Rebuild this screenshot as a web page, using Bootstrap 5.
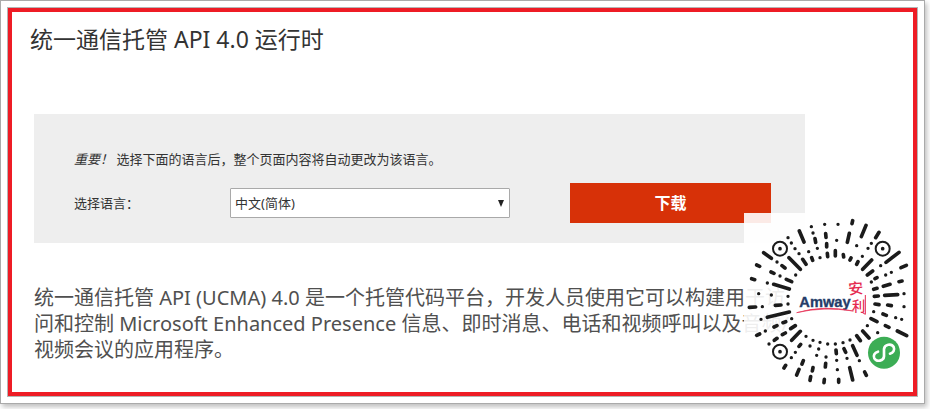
<!DOCTYPE html>
<html lang="zh-CN">
<head>
<meta charset="utf-8">
<meta name="viewport" content="width=device-width, initial-scale=1">
<title>统一通信托管 API 4.0 运行时</title>
<link href="https://cdn.jsdelivr.net/npm/bootstrap@5.3.0/dist/css/bootstrap.min.css" rel="stylesheet">
<style>
body{font-family:"Noto Sans","Noto Sans CJK SC",sans-serif;background:#fff;color:#333}
.sheet{margin:0 5px 5px 0;padding:6px;border:1px solid #aaa;box-shadow:2px 3px 5px rgba(0,0,0,.25)}
.frame{border:4px solid #ee1c25;outline:1px solid #b5b5b5;margin:1px;padding:11px 108px 29px 22px}
.page-title{font-size:23px;line-height:32px;font-weight:400;margin:0 0 59px -4px}
.lang-panel{background:#eee;padding:35px 34px 20px 40px;font-size:13px;line-height:20px}
.lang-form{padding-top:14px}
.lang-label{flex:0 0 156px}
.pick{position:relative}
.pick select{appearance:none;width:100%;height:30px;border:1px solid #a9a9a9;border-radius:1px;background:#fff;color:#333;padding:0 24px 0 4px;font-size:13px}
.pick svg{position:absolute;right:6px;top:12px;pointer-events:none}
.btn-get{flex:0 0 201px;height:40px;margin-left:60px;background:#d73108;color:#fff;font-size:16px;font-weight:700;padding:0}
.btn-get:hover{background:#b92a06;color:#fff}
.intro{font-size:20px;line-height:26px;color:#505050;margin:42px 0 0;padding-right:8px}
.code-card{top:201px;right:1px;width:168px;height:178px;background:rgba(255,255,255,.9)}
.code-card svg{display:block;width:100%;height:100%}
</style>
<script src="https://cdn.jsdelivr.net/npm/bootstrap@5.3.0/dist/js/bootstrap.bundle.min.js"></script>
</head>
<body>
<div class="sheet">
<main class="frame position-relative">
  <h1 class="page-title">统一通信托管 API 4.0 运行时</h1>
  <section class="lang-panel">
    <p class="mb-0"><em>重要！</em> 选择下面的语言后，整个页面内容将自动更改为该语言。</p>
    <form class="lang-form d-flex align-items-center">
      <label class="lang-label" for="lang">选择语言：</label>
      <div class="pick flex-grow-1">
        <select id="lang"><option>中文(简体)</option></select>
        <svg width="6" height="7" viewBox="0 0 6 7" aria-hidden="true"><path d="M0 0h6L3 7z" fill="#222"/></svg>
      </div>
      <button type="button" class="btn btn-get rounded-0 border-0">下载</button>
    </form>
  </section>
  <p class="intro">统一通信托管 API (UCMA) 4.0 是一个托管代码平台，开发人员使用它可以构建用于访问和控制 Microsoft Enhanced Presence 信息、即时消息、电话和视频呼叫以及音频/<wbr>视频会议的应用程序。</p>
  <div class="code-card position-absolute">
    <svg viewBox="12 24 504 534" role="img" aria-label="Amway 安利">
      <g fill="none" stroke="#1b1b1b" stroke-linecap="round">
        <path stroke-width="10" d="M214 65h.1M254 58h.1M294 58h.1M144 98h.1M219 84h.1M290 106h.1M350 122h.1M367 154h.1M384 130h.1M394 115h.1M154 114h.1M165 131h.1M177 146h.1M206 140h.1M232 130h.1M240 158h.1M111 171h.1M167 210h.1M120 213h.1M82 234h.1M56 266h.1M94 270h.1M144 274h.1M422 182h.1M454 202h.1M437 210h.1M394 231h.1M492 266h.1M67 305h.1M144 297h.1M63 343h.1M155 341h.1M76 378h.1M87 417h.1M198 394h.1M219 406h.1M166 442h.1M154 458h.1M210 423h.1M240 412h.1M263 417h.1M236 432h.1M230 451h.1M258 456h.1M492 305h.1M401 320h.1M467 338h.1M485 343h.1M382 362h.1M413 383h.1M330 405h.1M309 413h.1M286 417h.1M290 466h.1M321 460h.1M358 467h.1M292 494h.1"/>
        <path stroke-width="11" d="M338 47l-2 9M378 61l-14 34M417 82l-10 16M328 85l-6 27M178 78l14 33M225 101l2 11M257 86l1 11M260 116v10M262 145l1 10M286 137v16M310 149l1 7M333 159l-3 6M354 170l-4 8M215 158l3 8M188 163l10 15M147 158l34 35M71 143l23 17M126 182l9 7M50 180l9 4M93 201l9 4M139 223l16 7M35 221l9 3M101 238l47 14M395 165l-27 28M477 142l-39 30M483 188l16-7M398 198l-16 12M411 218l-6 3M477 230l9-2M430 244l20-6M401 253l10-3M434 271l39-2M403 274l12-1M28 307l19-1M106 301l17-1M82 337l66-16M129 353l8-3M102 366l9-4M152 371l14-9M50 391l9-4M103 406l8-6M127 389l9-5M155 406l26-27M182 418l-5 6M190 467l-4 10M137 481l-5 8M177 493l-7 17M219 488l-2 10M212 515l-2 11M257 475l-1 11M253 523l-1 10M405 297l12 2M443 300l11 2M429 327l10 4M393 341l18 9M436 362l11 5M472 378l28 14M368 378l19 21M350 392l11 15M338 422l13 29M312 431l5 11M288 435l1 11M329 488l9 37M374 501l5 10M296 523v9"/>
        <g stroke-width="6"><circle cx="120" cy="131" r="21"/><circle cx="428" cy="131" r="21"/><circle cx="120" cy="440" r="21"/></g>
        <path stroke-width="11" d="M120 131h.1M428 131h.1M120 440h.1"/>
      </g>
      <text x="178" y="306" font-family="Liberation Sans, sans-serif" font-size="44" font-weight="700" fill="#243c68" stroke="#243c68">Amway</text>
      <path d="M170 323Q250 299 340 318Q250 304 170 323Z" fill="#e52b50" stroke="#e52b50" stroke-width="2"/>
      <g font-family="Noto Sans CJK SC, sans-serif" font-weight="500" fill="#e52b50"><text x="325" y="267" font-size="45" transform="rotate(-5 347 250)">安</text><text x="336" y="317" font-size="40">利</text></g>
      <path d="M376 270v58l-10-6" fill="none" stroke="#e52b50" stroke-width="3"/>
      <circle cx="432" cy="443" r="48" fill="#3cad55"/>
      <path d="M414 440c-11 3-15 12-11 20 7 12 28 8 29-6v-22c2-14 22-18 29-6 4 9-1 17-11 20" fill="none" stroke="#fff" stroke-width="8" stroke-linecap="round"/>
    </svg>
  </div>
</main>
</div>
</body>
</html>
